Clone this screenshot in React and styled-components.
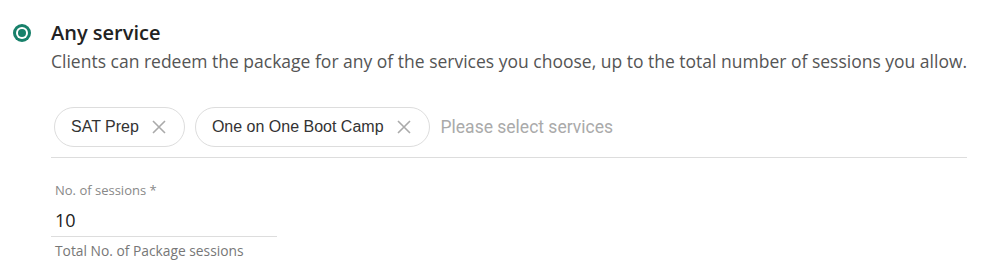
import React from "react";
import styled, { createGlobalStyle } from "styled-components";

const GlobalStyle = createGlobalStyle`
  body {
    margin: 0;
    background: #fff;
    font-family: "Open Sans", "Liberation Sans", sans-serif;
  }
`;

const Page = styled.div`
  padding: 19px 0 0 13px;
  width: 996px;
  box-sizing: border-box;
`;

const OptionRow = styled.div`
  display: flex;
  align-items: flex-start;
`;

const Radio = styled.span`
  flex: 0 0 auto;
  width: 18px;
  height: 18px;
  margin-top: 5px;
  border-radius: 50%;
  background: #17806a;
  display: flex;
  align-items: center;
  justify-content: center;

  &::after {
    content: "";
    width: 8px;
    height: 8px;
    border-radius: 50%;
    background: #17806a;
    box-shadow: 0 0 0 2px #fff;
  }
`;

const OptionBody = styled.div`
  margin-left: 20px;
  width: 916px;
`;

const Title = styled.div`
  font-size: 20px;
  font-weight: 600;
  color: #222;
  line-height: 28px;
`;

const Description = styled.div`
  font-size: 17.5px;
  color: #555;
  line-height: 24px;
  margin-top: 2px;
  white-space: nowrap;
`;

const SelectBox = styled.div`
  margin-top: 34px;
  padding: 0 0 10px 3px;
  border-bottom: 1px solid #ddd;
  display: flex;
  align-items: center;
  gap: 10px;
`;

const Chip = styled.div`
  display: flex;
  align-items: center;
  gap: 13px;
  height: 40px;
  box-sizing: border-box;
  padding: 0 18px 0 16px;
  border: 1px solid #ddd;
  border-radius: 20px;
  font-family: "Liberation Sans", Arial, sans-serif;
  font-size: 16px;
  color: #333;
`;

const ClearIcon = styled.svg`
  width: 14px;
  height: 14px;
  stroke: #aaa;
  stroke-width: 1.6;
  flex: 0 0 auto;
`;

const Placeholder = styled.span`
  font-family: Roboto, "Liberation Sans", sans-serif;
  font-size: 17.5px;
  color: #aaa;
  margin-left: 1px;
`;

const Field = styled.div`
  margin-top: 24px;
  width: 226px;
`;

const Label = styled.div`
  font-size: 13px;
  color: #888;
  padding-left: 4px;
  line-height: 16px;
`;

const Value = styled.div`
  font-size: 18px;
  color: #222;
  padding: 10px 0 4px 4px;
  line-height: 24px;
  border-bottom: 1px solid #ddd;
`;

const Helper = styled.div`
  font-size: 13.8px;
  color: #777;
  padding-left: 4px;
  margin-top: 5px;
  line-height: 18px;
`;

const X = () => (
  <ClearIcon viewBox="0 0 14 14" fill="none">
    <path d="M1 1 L13 13 M13 1 L1 13" />
  </ClearIcon>
);

export default function App() {
  const services = ["SAT Prep", "One on One Boot Camp"];
  return (
    <>
      <GlobalStyle />
      <Page>
        <OptionRow>
          <Radio />
          <OptionBody>
            <Title>Any service</Title>
            <Description>
              Clients can redeem the package for any of the services you
              choose, up to the total number of sessions you allow.
            </Description>
            <SelectBox>
              {services.map((s) => (
                <Chip key={s}>
                  {s}
                  <X />
                </Chip>
              ))}
              <Placeholder>Please select services</Placeholder>
            </SelectBox>
            <Field>
              <Label>No. of sessions *</Label>
              <Value>10</Value>
              <Helper>Total No. of Package sessions</Helper>
            </Field>
          </OptionBody>
        </OptionRow>
      </Page>
    </>
  );
}
